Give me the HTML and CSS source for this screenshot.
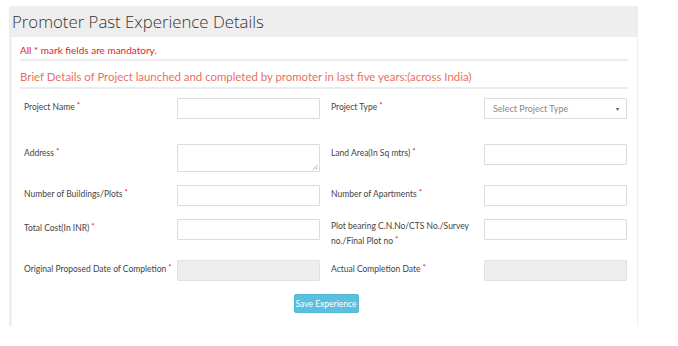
FILE: index.html
```html
<!DOCTYPE html>
<html>
<head>
<meta charset="utf-8">
<link rel="stylesheet" href="styles.css">
</head>
<body>
<div class="panel">
  <div class="panel-head">Promoter Past Experience Details</div>
  <div class="panel-body">
    <div class="note">All * mark fields are mandatory.</div>
    <div class="section-title">Brief Details of Project launched and completed by promoter in last five years:(across India)</div>
    <form class="form">
      <div class="row row-first">
        <div class="field">
          <label class="label">Project Name<span class="req">*</span></label>
          <input class="input" type="text">
        </div>
        <div class="field">
          <label class="label">Project Type<span class="req">*</span></label>
          <div class="select"><span>Select Project Type</span><span class="caret">&#9662;</span></div>
        </div>
      </div>
      <div class="row">
        <div class="field">
          <label class="label">Address<span class="req">*</span></label>
          <div class="textarea"><svg class="grip" width="6" height="6" viewBox="0 0 6 6"><path d="M5.5 1 L1 5.5 M5.5 3.5 L3.5 5.5" stroke="#999" stroke-width="0.8"/></svg></div>
        </div>
        <div class="field">
          <label class="label">Land Area(In Sq mtrs)<span class="req">*</span></label>
          <input class="input" type="text">
        </div>
      </div>
      <div class="row">
        <div class="field">
          <label class="label">Number of Buildings/Plots<span class="req">*</span></label>
          <input class="input" type="text">
        </div>
        <div class="field">
          <label class="label">Number of Apartments<span class="req">*</span></label>
          <input class="input" type="text">
        </div>
      </div>
      <div class="row row-tall">
        <div class="field">
          <label class="label">Total Cost(In INR)<span class="req">*</span></label>
          <input class="input" type="text">
        </div>
        <div class="field">
          <label class="label label-tight">Plot bearing C.N.No/CTS No./Survey no./Final Plot no<span class="req">*</span></label>
          <input class="input" type="text">
        </div>
      </div>
      <div class="row">
        <div class="field">
          <label class="label">Original Proposed Date of Completion<span class="req">*</span></label>
          <input class="input input-disabled" type="text" disabled>
        </div>
        <div class="field">
          <label class="label">Actual Completion Date<span class="req">*</span></label>
          <input class="input input-disabled" type="text" disabled>
        </div>
      </div>
      <div class="actions">
        <button type="button" class="btn">Save Experience</button>
      </div>
    </form>
  </div>
</div>
</body>
</html>
```
FILE: styles.css
```css
html, body {
  margin: 0;
  padding: 0;
  background: #fff;
}
body {
  font-family: "Lato", "Open Sans", "Liberation Sans", sans-serif;
  color: #333;
}
.panel {
  margin: 6px 0 0 9px;
  width: 629px;
}
.panel-head {
  background: #eeeeee;
  height: 31px;
  padding-left: 3px;
  font-family: "Open Sans", "Liberation Sans", sans-serif;
  font-weight: 300;
  font-size: 16.8px;
  line-height: 31px;
  color: #333;
  box-sizing: border-box;
}
.panel-body {
  border-left: 3px solid #f0f0f0;
  border-right: 1px solid #eeeeee;
  padding: 5px 9px 13px 8px;
}
.note {
  color: #e3202a;
  font-size: 10px;
  line-height: 16px;
  padding-bottom: 1px;
  border-bottom: 2px solid #ececec;
}
.section-title {
  color: #e9705f;
  font-size: 11.4px;
  line-height: 18px;
  padding: 7px 0 1px;
  border-bottom: 2px solid #ececec;
}
.form {
  margin: 0;
  padding: 9px 0 0 4px;
}
.row {
  display: flex;
  gap: 11px;
  margin-bottom: 13px;
}
.row-first {
  margin-bottom: 25px;
}
.row-tall {
  margin-bottom: 11px;
}
.field {
  display: flex;
  width: 296px;
}
.label {
  width: 153px;
  flex: none;
  font-size: 8.5px;
  line-height: 15px;
  padding-top: 2px;
  color: #444;
  box-sizing: border-box;
}
.label-tight {
  padding-top: 0;
  padding-right: 12px;
}
.req {
  color: #e3202a;
  font-size: 8px;
  line-height: 1;
  position: relative;
  top: -2px;
  margin-left: 2px;
}
.input, .select, .textarea {
  width: 143px;
  height: 21px;
  border: 1px solid #dcdcdc;
  border-radius: 1px;
  box-sizing: border-box;
  background: #fff;
  margin: 0;
  padding: 0 8px;
  font-family: inherit;
  flex: none;
}
.input-disabled {
  background: #eeeeee;
  border-color: #e2e2e2;
}
.textarea {
  height: 28px;
  position: relative;
}
.grip {
  position: absolute;
  right: 1px;
  bottom: 1px;
}
.select {
  display: flex;
  align-items: center;
  justify-content: space-between;
  font-size: 9px;
  color: #888;
}
.caret {
  font-size: 6px;
  color: #555;
  margin-right: -1px;
}
.actions {
  display: flex;
  justify-content: center;
}
.btn {
  background: #5bc0de;
  border: 1px solid #52bad9;
  border-radius: 2px;
  color: #fff;
  font-family: inherit;
  font-size: 8.5px;
  height: 19px;
  width: 65px;
  padding: 0;
}
```
